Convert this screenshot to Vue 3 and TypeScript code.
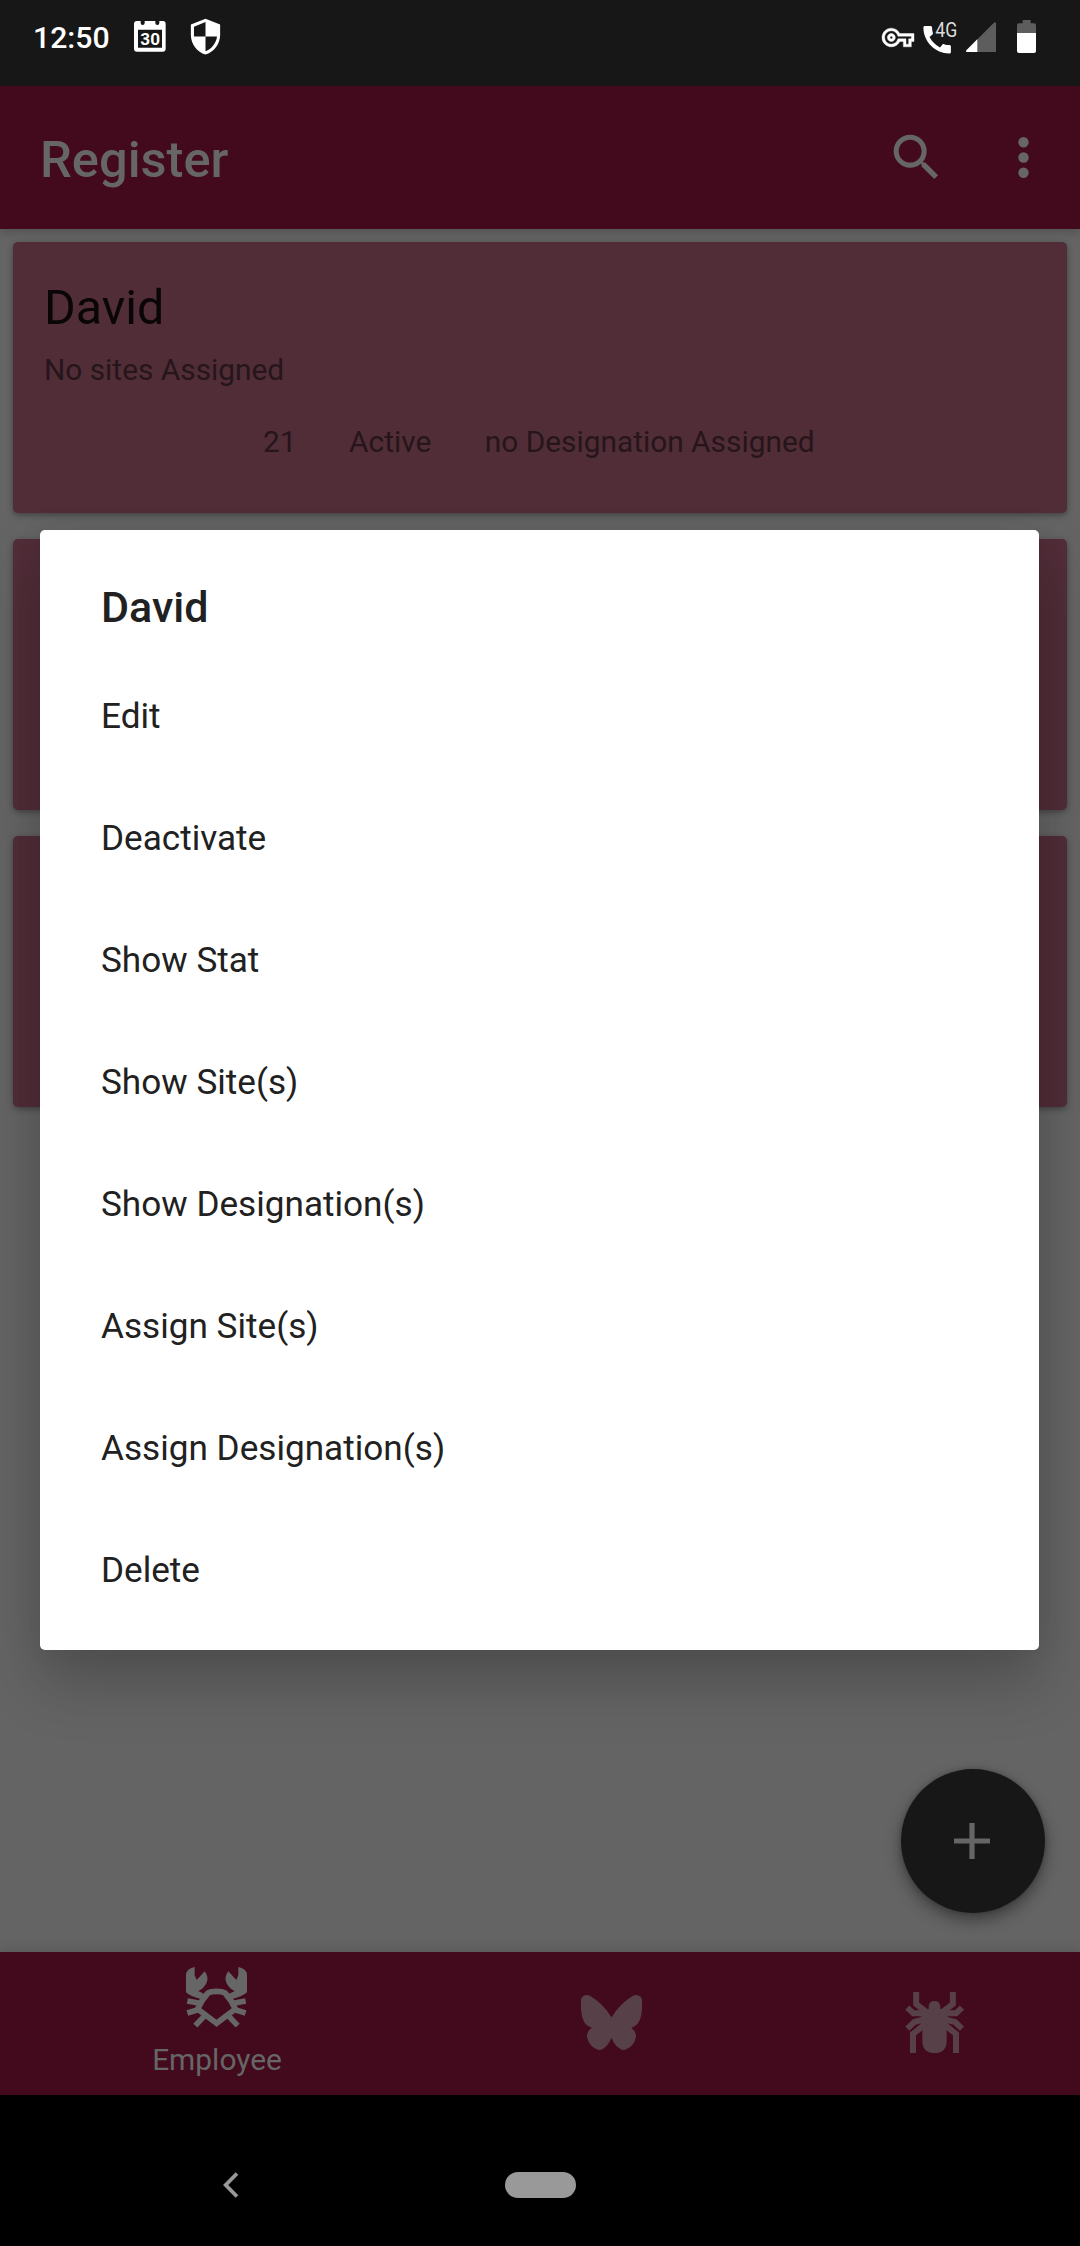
<script setup lang="ts">
interface Employee {
  name: string
  sites: string
  age: string
  status: string
  designation: string
}

const employees: Employee[] = [
  { name: 'David', sites: 'No sites Assigned', age: '21', status: 'Active', designation: 'no Designation Assigned' },
  { name: '', sites: '', age: '', status: '', designation: '' },
  { name: '', sites: '', age: '', status: '', designation: '' },
]

const actions: string[] = [
  'Edit',
  'Deactivate',
  'Show Stat',
  'Show Site(s)',
  'Show Designation(s)',
  'Assign Site(s)',
  'Assign Designation(s)',
  'Delete',
]
</script>

<template>
  <div class="screen">
    <header class="status">
      <span class="clock">12:50</span>
      <svg class="calendar" viewBox="402 61 96 96">
        <path
          fill="#fff"
          fill-rule="evenodd"
          d="M411 64H422V70Q422 76 428 76Q434 76 434 70V64H466V70Q466 76 472 76Q478 76 478 70V64H489Q497 64 497 73V147Q497 156 488 156H411Q402 156 402 147V73Q402 64 411 64ZM414 90V144H486V90Z"
        />
        <text x="421" y="135" textLength="59" lengthAdjust="spacingAndGlyphs" class="cal-num">30</text>
      </svg>
      <svg class="shield" viewBox="0 0 24 24">
        <path
          fill="#fff"
          d="M12 1L3 4.6v6.4c0 5.55 3.84 10.74 9 12 5.16-1.26 9-6.45 9-12V4.6L12 1zm0 10.99h7.1c-.53 4.12-3.38 7.79-7.1 9.04V12H4.9V6l7.1-2.9v8.89z"
        />
      </svg>
      <span class="spacer"></span>
      <svg class="key" viewBox="0 5 24 14">
        <path
          fill="#fff"
          stroke="#fff"
          stroke-width="0.3"
          d="M22 19h-6v-4h-2.68c-1.14 2.42-3.6 4-6.32 4-3.86 0-7-3.14-7-7s3.14-7 7-7c2.72 0 5.17 1.58 6.32 4H24v6h-2v4zm-4-2h2v-4h2v-2H11.94l-.23-.67C11.01 8.34 9.11 7 7 7c-2.76 0-5 2.24-5 5s2.24 5 5 5c2.11 0 4.01-1.34 4.71-3.33l.23-.67H18v4zM7 15c-1.65 0-3-1.35-3-3s1.35-3 3-3 3 1.35 3 3-1.35 3-3 3zm0-4c-.55 0-1 .45-1 1s.45 1 1 1 1-.45 1-1-.45-1-1-1z"
        />
      </svg>
      <svg class="call" viewBox="249 48 105 114">
        <path
          fill="#fff"
          transform="translate(236.5 64.5) scale(4.58)"
          d="M20.01 15.38c-1.23 0-2.42-.2-3.53-.56-.35-.12-.74-.03-1.01.24l-1.57 1.97c-2.83-1.35-5.48-3.9-6.89-6.83l1.95-1.66c.27-.28.35-.67.24-1.02-.37-1.11-.56-2.3-.56-3.53 0-.54-.45-.99-.99-.99H4.19C3.65 3 3 3.24 3 3.99 3 13.28 10.73 21 20.01 21c.71 0 .99-.63.99-1.18v-3.45c0-.54-.45-.99-.99-.99z"
        />
        <text x="286" y="110" textLength="66" lengthAdjust="spacingAndGlyphs" class="net">4G</text>
      </svg>
      <svg class="signal" viewBox="377 65 91 91">
        <path fill="#5d5d5d" d="M380 156Q375 153 379 149L461 67Q466 63 468 69V152Q468 156 464 156Z" />
        <path fill="#fff" d="M380 156Q375 153 379 149L411 117V156Z" />
      </svg>
      <svg class="battery" viewBox="531 60 57 99">
        <path fill="#5d5d5d" d="M548 60H572V70H582Q588 70 588 76V99H531V76Q531 70 537 70H548Z" />
        <path fill="#fff" d="M531 99H588V153Q588 159 582 159H537Q531 159 531 153Z" />
      </svg>
    </header>

    <div class="appbar">
      <h1 class="title">Register</h1>
      <svg class="bar-icon" viewBox="0 0 24 24">
        <path
          fill="#666"
          d="M15.5 14h-.79l-.28-.27A6.471 6.471 0 0 0 16 9.5 6.5 6.5 0 1 0 9.5 16c1.61 0 3.09-.59 4.23-1.57l.27.28v.79l5 4.99L20.49 19l-4.99-5zm-6 0C7.01 14 5 11.99 5 9.5S7.01 5 9.5 5 14 7.01 14 9.5 11.99 14 9.5 14z"
        />
      </svg>
      <svg class="bar-icon more" viewBox="0 0 24 24" fill="#666">
        <circle cx="12" cy="6" r="2.05" />
        <circle cx="12" cy="12" r="2.05" />
        <circle cx="12" cy="18" r="2.05" />
      </svg>
    </div>

    <main class="content">
      <article v-for="(e, i) in employees" :key="i" class="card">
        <h2 class="name">{{ e.name }}</h2>
        <p class="sites">{{ e.sites }}</p>
        <div class="meta">
          <span class="age">{{ e.age }}</span>
          <span class="state">{{ e.status }}</span>
          <span>{{ e.designation }}</span>
        </div>
      </article>
      <button class="fab" type="button" aria-label="Add">
        <svg viewBox="0 0 36 36"><path fill="#666" d="M15.4 0h5.2v15.4H36v5.2H20.6V36h-5.2V20.6H0v-5.2h15.4z" /></svg>
      </button>
    </main>

    <nav class="tabs">
      <div class="tab first">
        <svg class="tab-icon" viewBox="138 80 183 183">
          <g fill="#666">
            <path d="M138 156V102Q141 84 164 80V104L170 119L194 93Q207 110 200 127Q192 144 175 152L201 165L191 179Q150 168 138 156Z" />
            <path d="M321 156V102Q318 84 295 80V104L289 119L265 93Q252 110 259 127Q267 144 284 152L258 165L268 179Q309 168 321 156Z" />
          </g>
          <path
            fill="none"
            stroke="#666"
            stroke-width="17"
            d="M229.500 249L173 206Q184 180 204 158Q212 153 229.500 153Q247 153 255 158Q275 180 286 206Z"
          />
          <g stroke="#666" stroke-width="17">
            <path d="M142 182L180 189M142 218L179 207M166 256L195 225" />
            <path d="M317 182L279 189M317 218L280 207M293 256L264 225" />
          </g>
        </svg>
        <span class="tab-label">Employee</span>
      </div>
      <div class="tab second">
        <svg class="tab-icon" viewBox="123 156 183 183">
          <path
            fill="#574048"
            d="M214.500 232Q189 190 150 167Q136 162 127 170Q123 174 123 181V205Q125 256 155 263Q141 273 141 290Q145 316 170 328Q179 332 188 327Q204 318 214.500 294Q225 318 241 327Q250 332 259 328Q284 316 288 290Q288 273 274 263Q304 256 306 205V181Q306 174 302 170Q293 162 279 167Q240 190 214.500 232Z"
          />
        </svg>
      </div>
      <div class="tab third">
        <svg class="tab-icon" viewBox="132 156 183 183">
          <path
            fill="#574048"
            d="M206 206V200Q207 183 223.500 183Q240 183 241 200V206L254 216L258 255Q260 264 260 280V302Q260 339 223.500 339Q187 339 187 302V280Q187 264 189 255L193 216Z"
          />
          <g fill="none" stroke="#574048" stroke-width="18">
            <path d="M168.500 156V192L206 221M142 203L160 220H184L215 236M142 266L163 246L215 232M159 339V282L212 239" />
            <path d="M278.500 156V192L241 221M306 203L288 220H263L232 236M306 266L285 246L232 232M288 339V282L235 239" />
          </g>
        </svg>
      </div>
    </nav>

    <footer class="sysnav">
      <svg class="back" viewBox="0 0 16 26"><path fill="none" stroke="#999" stroke-width="3.800" d="M14 1.500L2.700 13L14 24.500" /></svg>
      <span class="pill"></span>
    </footer>

    <section class="dialog">
      <h3 class="dialog-title">David</h3>
      <ul class="actions">
        <li v-for="a in actions" :key="a">{{ a }}</li>
      </ul>
    </section>
  </div>
</template>

<style>
body {
  margin: 0;
  background: #000;
}
</style>

<style scoped>
.screen {
  position: relative;
  display: flex;
  flex-direction: column;
  width: 1080px;
  height: 2246px;
  overflow: hidden;
  background: #646464;
  font-family: Roboto, 'Liberation Sans', sans-serif;
}
h1,
h2,
h3,
p,
ul {
  margin: 0;
  padding: 0;
  font-weight: 400;
}
svg {
  display: block;
  flex: none;
}
.status {
  display: flex;
  align-items: flex-start;
  height: 86px;
  flex: none;
  background: #171717;
  box-sizing: border-box;
  padding: 17px 44px 0 33px;
}
.clock {
  width: 101px;
  padding-top: 1px;
  font-size: 30.2px;
  line-height: 40px;
  font-weight: 500;
  color: #fff;
}
.calendar {
  width: 32px;
  height: 32px;
  margin-top: 3px;
}
.cal-num {
  font: 700 47px Roboto, sans-serif;
  fill: #fff;
}
.shield {
  width: 39px;
  height: 39px;
  margin-left: 19.5px;
}
.spacer {
  flex: 1;
}
.key {
  width: 32px;
  height: 19px;
  margin-top: 10.5px;
  overflow: visible;
}
.call {
  width: 35px;
  height: 38px;
  margin: -1px 0 0 8.7px;
  overflow: visible;
}
.net {
  font: 400 59px Roboto, sans-serif;
  fill: #ddd;
}
.signal {
  width: 30.3px;
  height: 30.3px;
  margin: 4.7px 0 0 7.7px;
}
.battery {
  width: 19px;
  height: 33px;
  margin: 3px 0 0 21px;
}
.appbar {
  position: relative;
  z-index: 1;
  display: flex;
  align-items: center;
  flex: none;
  height: 143px;
  box-sizing: border-box;
  padding: 0 26px 0 40px;
  background: #43091c;
  box-shadow: 0 3px 9px rgba(0, 0, 0, 0.2);
}
.title {
  flex: 1;
  padding-top: 5px;
  font-size: 50.6px;
  line-height: 60px;
  font-weight: 500;
  color: #666;
}
.bar-icon {
  width: 61px;
  height: 61px;
}
.more {
  margin-left: 46px;
}
.content {
  position: relative;
  flex: none;
  height: 1723px;
  box-sizing: border-box;
  padding: 13px;
  display: flex;
  flex-direction: column;
  gap: 26px;
}
.card {
  flex: none;
  height: 271px;
  box-sizing: border-box;
  padding: 36px 31px 0;
  border-radius: 5px;
  background: #512d38;
  box-shadow: 0 2px 6px rgba(0, 0, 0, 0.35);
}
.name {
  height: 60px;
  font-size: 48.4px;
  line-height: 60px;
  color: #0a0607;
}
.sites,
.meta {
  font-size: 29.85px;
  line-height: 40px;
  color: #26151a;
}
.sites {
  height: 40px;
  margin-top: 12px;
}
.meta {
  display: flex;
  margin-top: 32px;
  padding-left: 219px;
}
.age {
  margin-right: 52.5px;
}
.state {
  margin-right: 53.5px;
}
.fab {
  position: absolute;
  left: 901px;
  top: 1540px;
  width: 144px;
  height: 144px;
  padding: 0 3px 1px 0;
  border: 0;
  border-radius: 50%;
  background: #171717;
  box-shadow: 0 7px 16px rgba(0, 0, 0, 0.4), 0 0 5px rgba(0, 0, 0, 0.2);
  display: flex;
  align-items: center;
  justify-content: center;
}
.fab svg {
  width: 36px;
  height: 36px;
}
.tabs {
  position: relative;
  display: flex;
  flex: none;
  height: 143px;
  background: #43091c;
  box-shadow: 0 0 14px rgba(0, 0, 0, 0.16);
}
.tab {
  display: flex;
  flex-direction: column;
  align-items: center;
  box-sizing: border-box;
  padding-top: 40px;
}
.first {
  width: 433px;
  padding-top: 15px;
}
.second {
  width: 357px;
}
.third {
  width: 288px;
}
.tab-icon {
  width: 61px;
  height: 61px;
}
.tab-label {
  margin-top: 12px;
  padding-left: 1px;
  font-size: 29.9px;
  line-height: 40px;
  color: #666;
}
.sysnav {
  display: flex;
  align-items: center;
  flex: none;
  height: 151px;
  box-sizing: border-box;
  padding: 29px 0 0 223px;
  background: #000;
}
.back {
  width: 16px;
  height: 26px;
}
.pill {
  width: 71px;
  height: 26px;
  margin-left: 266px;
  border-radius: 13px;
  background: #999;
}
.dialog {
  position: absolute;
  left: 40px;
  top: 530px;
  width: 999px;
  height: 1120px;
  box-sizing: border-box;
  padding: 47px 61px 0;
  border-radius: 5px;
  background: #fff;
  box-shadow: 0 32px 60px rgba(0, 0, 0, 0.22), 0 0 30px rgba(0, 0, 0, 0.05);
}
.dialog-title {
  font-size: 43px;
  line-height: 60px;
  font-weight: 500;
  color: #212121;
}
.actions {
  list-style: none;
  margin-top: 18px;
}
.actions li {
  height: 122px;
  font-size: 35.15px;
  line-height: 122px;
  color: #212121;
}
</style>
